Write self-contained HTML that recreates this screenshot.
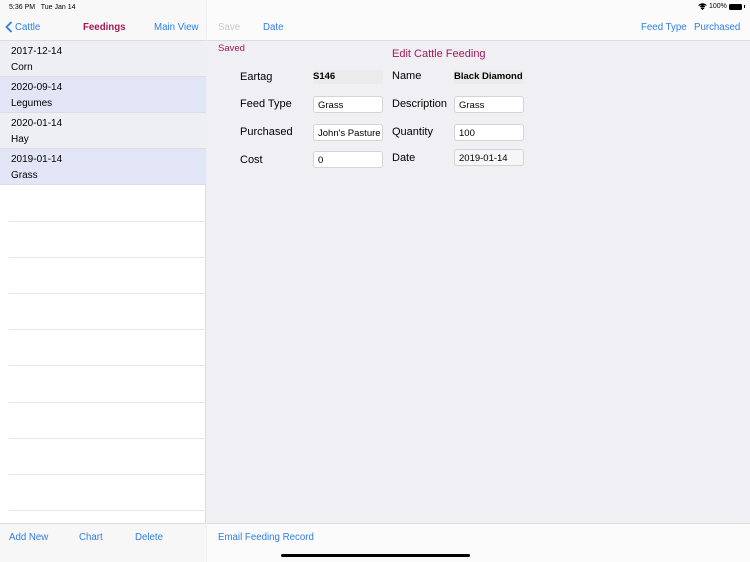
<!DOCTYPE html>
<html><head><meta charset="utf-8">
<style>
*{margin:0;padding:0;box-sizing:border-box}
body{width:750px;height:562px;overflow:hidden;font-family:"Liberation Sans",sans-serif;background:#efeff4;position:relative;color:#000}
.abs{position:absolute}
.blue{color:#2f7ee6}
#left{left:0;top:0;width:206px;height:562px;background:#fff;border-right:1px solid #ddd}
#navL{left:0;top:0;width:206px;height:41px;background:#f8f8f8;border-bottom:1px solid #dcdcdc}
#navR{left:207px;top:0;width:543px;height:41px;background:#fbfbfb;border-bottom:1px solid #dcdcdc}
.row{position:absolute;left:0;width:206px;height:36px;border-bottom:1px solid #dcdce4}
.row .d{position:absolute;left:11px;top:5px;font-size:10px}
.row .t{position:absolute;left:11px;top:21px;font-size:10px}
.line{position:absolute;left:9px;width:197px;height:1px;background:#e6e6e6}
.lbl{position:absolute;font-size:11px}
.fld{position:absolute;height:17px;background:#fff;border:1px solid #d4d4d4;border-radius:3px;font-size:9.5px;padding:3px 0 0 4px}
.ro{position:absolute;height:14px;background:#ebebeb;font-size:9.5px;font-weight:bold;padding:1px 0 0 0}
#tbL{left:0;top:523px;width:206px;height:39px;background:#f7f7f7;border-top:1px solid #dcdcdc}
#tbR{left:207px;top:523px;width:543px;height:39px;background:#fbfbfb;border-top:1px solid #dcdcdc}
.nt{font-size:9.7px;position:absolute}
</style></head><body>
<div id="left" class="abs"></div>
<div id="navL" class="abs"></div>
<div id="navR" class="abs"></div>
<div class="abs" style="left:9px;top:4px;font-size:7px">5:36 PM&nbsp;&nbsp; Tue Jan 14</div>
<div class="abs" style="left:698px;top:3px;font-size:7px;display:flex;align-items:center;gap:2px">
<svg width="9" height="7" viewBox="0 0 9 7"><path d="M0.5 2.5Q4.5-1 8.5 2.5M2 4Q4.5 2 7 4M4.5 6.5L3.3 5.2Q4.5 4.4 5.7 5.2Z" stroke="#000" stroke-width="1" fill="#000"/></svg>
<span>100%</span><span style="display:inline-block;width:13px;height:6px;background:#000;border-radius:1.5px"></span><span style="display:inline-block;width:1px;height:3px;background:#000"></span></div>
<svg class="abs" style="left:5px;top:21px" width="8" height="12" viewBox="0 0 8 12"><path d="M6.5 1L1.5 6L6.5 11" stroke="#2f7ee6" stroke-width="1.8" fill="none"/></svg>
<div class="nt blue" style="left:15px;top:22px">Cattle</div>
<div class="nt" style="left:83px;top:22px;color:#a3185a;font-weight:bold">Feedings</div>
<div class="nt blue" style="left:154px;top:22px">Main View</div>
<div class="nt" style="left:218px;top:22px;color:#c8c8c8">Save</div>
<div class="nt blue" style="left:263px;top:22px">Date</div>
<div class="nt blue" style="left:641px;top:22px">Feed Type</div>
<div class="nt blue" style="left:694px;top:22px">Purchased</div>

<div class="row" style="top:41px;background:#eeeff3"><div class="d">2017-12-14</div><div class="t">Corn</div></div>
<div class="row" style="top:77px;background:#e2e5f6"><div class="d">2020-09-14</div><div class="t">Legumes</div></div>
<div class="row" style="top:113px;background:#eeeff3"><div class="d">2020-01-14</div><div class="t">Hay</div></div>
<div class="row" style="top:149px;background:#e2e5f6"><div class="d">2019-01-14</div><div class="t">Grass</div></div>
<div class="line" style="top:221px"></div><div class="line" style="top:257px"></div><div class="line" style="top:293px"></div><div class="line" style="top:329px"></div><div class="line" style="top:365px"></div><div class="line" style="top:402px"></div><div class="line" style="top:438px"></div><div class="line" style="top:474px"></div><div class="line" style="top:510px"></div>

<div class="abs" style="left:218px;top:43px;font-size:9.5px;color:#a3185a">Saved</div>
<div class="abs" style="left:392px;top:48px;font-size:11px;color:#a3185a">Edit Cattle Feeding</div>
<div class="lbl" style="left:240px;top:71px">Eartag</div>
<div class="ro" style="left:313px;top:70px;width:70px">S146</div>
<div class="lbl" style="left:392px;top:70px">Name</div>
<div class="ro" style="left:454px;top:70px;width:70px">Black Diamond</div>
<div class="lbl" style="left:240px;top:98px">Feed Type</div>
<div class="fld" style="left:313px;top:96px;width:70px">Grass</div>
<div class="lbl" style="left:392px;top:98px">Description</div>
<div class="fld" style="left:454px;top:96px;width:70px">Grass</div>
<div class="lbl" style="left:240px;top:126px">Purchased</div>
<div class="fld" style="left:313px;top:124px;width:70px">John's Pasture</div>
<div class="lbl" style="left:392px;top:126px">Quantity</div>
<div class="fld" style="left:454px;top:124px;width:70px">100</div>
<div class="lbl" style="left:240px;top:154px">Cost</div>
<div class="fld" style="left:313px;top:151px;width:70px">0</div>
<div class="lbl" style="left:392px;top:152px">Date</div>
<div class="fld" style="left:454px;top:149px;width:70px;background:#f6f6f6">2019-01-14</div>

<div id="tbL" class="abs"></div>
<div id="tbR" class="abs"></div>
<div class="nt blue" style="left:9px;top:532px">Add New</div>
<div class="nt blue" style="left:79px;top:532px">Chart</div>
<div class="nt blue" style="left:135px;top:532px">Delete</div>
<div class="nt blue" style="left:218px;top:532px">Email Feeding Record</div>
<div class="abs" style="left:281px;top:554px;width:189px;height:3px;background:#000;border-radius:2px"></div>
</body></html>
